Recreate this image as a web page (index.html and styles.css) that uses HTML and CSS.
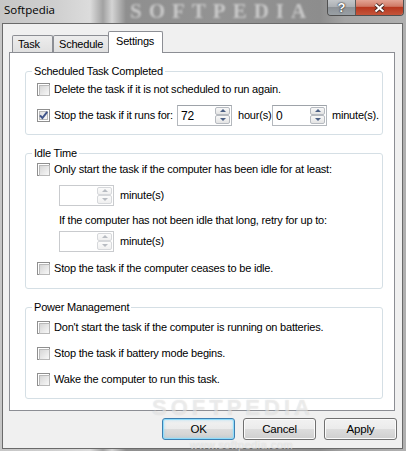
FILE: index.html
```html
<!DOCTYPE html>
<html>
<head>
<meta charset="utf-8">
<title>Softpedia</title>
<link rel="stylesheet" href="styles.css">
</head>
<body>
<div class="window">
  <div class="titlebar">
    <span class="glass-logo">SOFTPEDIA</span>
    <span class="title">Softpedia</span>
    <div class="caps">
      <span class="cap help">?</span>
      <span class="cap close"><svg width="13" height="10" viewBox="0 0 13 10"><path d="M2.5 1.5 L10.5 8.5 M10.5 1.5 L2.5 8.5" stroke="#4a2a24" stroke-width="3.8"/><path d="M2.5 1.5 L10.5 8.5 M10.5 1.5 L2.5 8.5" stroke="#fff" stroke-width="2"/></svg></span>
    </div>
  </div>
  <div class="client">
    <div class="tabs">
      <div class="tab t-task">Task</div>
      <div class="tab t-schedule">Schedule</div>
      <div class="tab active">Settings</div>
    </div>
    <div class="panel">
      <div class="group g1">
        <div class="gtitle">Scheduled Task Completed</div>
        <div class="row mt2"><span class="cb"></span>Delete the task if it is not scheduled to run again.</div>
        <div class="row tall mt6">
          <svg class="cbx" width="13" height="13" viewBox="0 0 13 13"><defs><linearGradient id="cbg" x1="0" y1="0" x2="1" y2="1"><stop offset="0" stop-color="#dedede"/><stop offset="1" stop-color="#fbfbfb"/></linearGradient></defs><rect x="0.5" y="0.5" width="12" height="12" fill="#fff" stroke="#8f8f8f"/><rect x="2.5" y="2.5" width="8" height="8" fill="url(#cbg)" stroke="#b9b9b9"/><path d="M3 6.3 L5.4 9 L10.2 2.8" stroke="#41558a" stroke-width="2" fill="none"/></svg>
          <span class="runs">Stop the task if it runs for:</span>
          <div class="spin"><span class="val">72</span><span class="arrows"><span class="up"></span><span class="down"></span></span></div>
          <span class="unit-h">hour(s)</span>
          <div class="spin"><span class="val">0</span><span class="arrows"><span class="up"></span><span class="down"></span></span></div>
          <span class="unit-m">minute(s).</span>
        </div>
      </div>

      <div class="group g2">
        <div class="gtitle">Idle Time</div>
        <div class="row"><span class="cb"></span>Only start the task if the computer has been idle for at least:</div>
        <div class="row tall indent mt6">
          <div class="spin disabled"><span class="val"></span><span class="arrows"><span class="up"></span><span class="down"></span></span></div>
          <span class="unit-i">minute(s)</span>
        </div>
        <div class="row indent mt5">If the computer has not been idle that long, retry for up to:</div>
        <div class="row tall indent mt1">
          <div class="spin disabled"><span class="val"></span><span class="arrows"><span class="up"></span><span class="down"></span></span></div>
          <span class="unit-i">minute(s)</span>
        </div>
        <div class="row mt7"><span class="cb"></span>Stop the task if the computer ceases to be idle.</div>
      </div>

      <div class="group g3">
        <div class="gtitle">Power Management</div>
        <div class="row mt4"><span class="cb"></span>Don't start the task if the computer is running on batteries.</div>
        <div class="row mt8"><span class="cb"></span>Stop the task if battery mode begins.</div>
        <div class="row mt8"><span class="cb"></span>Wake the computer to run this task.</div>
      </div>
    </div>
    <div class="actions">
      <div class="btn default">OK</div>
      <div class="btn">Cancel</div>
      <div class="btn">Apply</div>
    </div>
  </div>
  <span class="wm-big">SOFTPEDIA</span>
  <span class="wm-url">www.softpedia.com</span>
</div>
</body>
</html>
```

FILE: styles.css
```css
* { box-sizing: border-box; }
html, body { margin: 0; padding: 0; }
body {
  width: 406px;
  height: 451px;
  overflow: hidden;
  font-family: "Liberation Sans", Arial, sans-serif;
  font-size: 11px;
  letter-spacing: -0.2px;
  color: #000;
  background: #a0a0a0;
}
.window {
  position: relative;
  width: 406px;
  height: 451px;
  display: flex;
  flex-direction: column;
  overflow: hidden;
  background: linear-gradient(to right, #c6c6c6 0px, #cfcfcf 55px, #dcdcdc 90px, #a2a2a2 103px, #d4d4d4 112px, #8f8f8f 126px, #939393 220px, #8d8d8d 320px, #a4a4a4 345px, #b0b0b0 406px);
}
.titlebar {
  position: relative;
  height: 23px;
  flex: none;
  display: flex;
  align-items: flex-start;
}
.glass-logo {
  position: absolute;
  left: 130px;
  top: 0;
  height: 23px;
  line-height: 23px;
  font-family: "Liberation Serif", serif;
  font-weight: bold;
  font-size: 21px;
  letter-spacing: 7px;
  color: rgba(215, 215, 215, 0.8);
  filter: blur(1.2px);
  white-space: nowrap;
}
.title {
  position: relative;
  font-family: "Open Sans", "Noto Sans", sans-serif;
  font-size: 11.5px;
  letter-spacing: 0;
  line-height: 16px;
  margin: 2px 0 0 4px;
  color: #000;
}
.caps {
  position: relative;
  margin-left: auto;
  margin-right: 2px;
  display: flex;
  height: 16px;
  border: 1px solid #505050;
  border-top: none;
  border-radius: 0 0 4px 4px;
  overflow: hidden;
}
.cap {
  display: flex;
  align-items: center;
  justify-content: center;
  height: 100%;
}
.help {
  width: 28px;
  border-right: 1px solid #5a5a5a;
  background: linear-gradient(#c3c6c9 0%, #adb1b5 45%, #8d9297 50%, #9aa0a5 100%);
  color: #fff;
  font: bold 13px "Liberation Sans", sans-serif;
  letter-spacing: 0;
  text-shadow: 0 0 2px #222, 0 0 1px #222;
  padding-bottom: 1px;
}
.close {
  width: 47px;
  background: linear-gradient(#e3a494 0%, #d07a66 42%, #b8381f 50%, #c4553b 100%);
}
.client {
  flex: none;
  height: 426px;
  margin: 0 3px 0 2px;
  border: 1px solid #6a6a6a;
  background: #f0f0f0;
  display: flex;
  flex-direction: column;
}
.tabs {
  position: relative;
  z-index: 1;
  display: flex;
  align-items: flex-start;
  height: 22px;
  margin: 7px 0 0 9px;
}
.tab {
  display: flex;
  align-items: center;
  height: 17px;
  margin-top: 4px;
  border: 1px solid #8c8e94;
  border-bottom: none;
  border-radius: 2px 2px 0 0;
  background: linear-gradient(#ededed, #e0e0e0);
  padding-left: 5px;
}
.t-task { width: 41px; }
.t-schedule { width: 56px; }
.tab.active {
  width: 55px;
  height: 22px;
  margin-top: 0;
  margin-left: -1px;
  background: #fff;
  padding-left: 7px;
  padding-bottom: 3px;
}
.panel {
  flex: none;
  width: 386px;
  height: 359px;
  margin: -1px 0 0 6px;
  border: 1px solid #8c8e94;
  background: #fff;
  padding: 0 11px 0 15px;
}
.group {
  border: 1px solid #d5dfe5;
  border-radius: 3px;
  margin-top: 18px;
  padding: 0 0 0 11px;
}
.g1 { padding-bottom: 8px; }
.g2 { padding-bottom: 11px; }
.g3 { padding-bottom: 10px; }
.gtitle {
  width: max-content;
  margin: -7px 0 0 -5px;
  padding: 0 2px;
  background: #fff;
  line-height: 13px;
  height: 13px;
}
.row {
  display: flex;
  align-items: center;
  height: 18px;
  white-space: nowrap;
}
.row.tall { height: 22px; }
.mt1 { margin-top: 1px; }
.mt2 { margin-top: 2px; }
.mt4 { margin-top: 4px; }
.mt5 { margin-top: 5px; }
.mt6 { margin-top: 6px; }
.mt7 { margin-top: 7px; }
.mt8 { margin-top: 8px; }
.indent { padding-left: 22px; }
.cb {
  flex: none;
  width: 13px;
  height: 13px;
  margin-right: 4px;
  border: 1px solid #8f8f8f;
  background: #fff;
  padding: 1px;
}
.cb::before {
  content: "";
  display: block;
  width: 9px;
  height: 9px;
  border: 1px solid #b9b9b9;
  background: linear-gradient(135deg, #d6d6d6, #f8f8f8);
}
.cbx {
  flex: none;
  display: block;
  margin-right: 4px;
}
.runs { width: 123px; flex: none; }
.unit-h { width: 34px; margin-left: 6px; flex: none; }
.unit-m { margin-left: 5px; }
.unit-i { margin-left: 6px; }
.spin {
  flex: none;
  display: flex;
  width: 55px;
  height: 21px;
  border: 1px solid #b4b8bd;
  border-top-color: #9ea3a9;
  background: #fff;
  padding: 1px;
}
.spin .val {
  flex: 1;
  padding: 1px 0 0 2px;
  font-size: 12px;
  line-height: 16px;
}
.arrows {
  display: flex;
  flex-direction: column;
  width: 15px;
}
.up, .down {
  flex: 1;
  display: flex;
  align-items: center;
  justify-content: center;
  border: 1px solid #b6bac0;
  border-radius: 2px;
  background: linear-gradient(#f8f8f8, #e4e4e4);
}
.up::after {
  content: "";
  border-left: 3px solid transparent;
  border-right: 3px solid transparent;
  border-bottom: 3px solid #4d6185;
}
.down::after {
  content: "";
  border-left: 3px solid transparent;
  border-right: 3px solid transparent;
  border-top: 3px solid #4d6185;
}
.spin.disabled { border-color: #c9cbce; }
.spin.disabled .up, .spin.disabled .down {
  border-color: #d6d8db;
  background: linear-gradient(#fbfbfb, #f0f0f0);
}
.spin.disabled .up::after { border-bottom-color: #b8bcc2; }
.spin.disabled .down::after { border-top-color: #b8bcc2; }
.actions {
  display: flex;
  justify-content: flex-end;
  gap: 8px;
  margin-top: 7px;
  padding-right: 5px;
}
.btn {
  width: 73px;
  height: 22px;
  display: flex;
  align-items: center;
  justify-content: center;
  border: 1px solid #707070;
  border-radius: 3px;
  background: linear-gradient(#f2f2f2 0%, #ebebeb 50%, #dddddd 50%, #cfcfcf 100%);
  box-shadow: inset 0 0 0 1px #fbfbfb;
  font-size: 11.5px;
}
.btn.default {
  border-color: #3c7fb1;
  box-shadow: inset 0 0 0 1px #8fdcfb, inset 0 0 3px 1px rgba(120, 210, 250, 0.5);
}
.wm-big {
  position: absolute;
  left: 152px;
  top: 398px;
  height: 20px;
  line-height: 20px;
  font-family: "Liberation Sans", sans-serif;
  font-weight: bold;
  font-size: 22px;
  letter-spacing: 4px;
  color: rgba(255, 255, 255, 0.45);
  text-shadow: 0 0 1px rgba(150, 150, 150, 0.35);
  white-space: nowrap;
  pointer-events: none;
}
.wm-url {
  position: absolute;
  left: 190px;
  top: 439px;
  height: 12px;
  line-height: 12px;
  font-family: "Liberation Sans", sans-serif;
  font-size: 11px;
  letter-spacing: 0.5px;
  color: rgba(255, 255, 255, 0.55);
  text-shadow: 0 0 1px rgba(140, 140, 140, 0.4);
  white-space: nowrap;
  pointer-events: none;
}
```
